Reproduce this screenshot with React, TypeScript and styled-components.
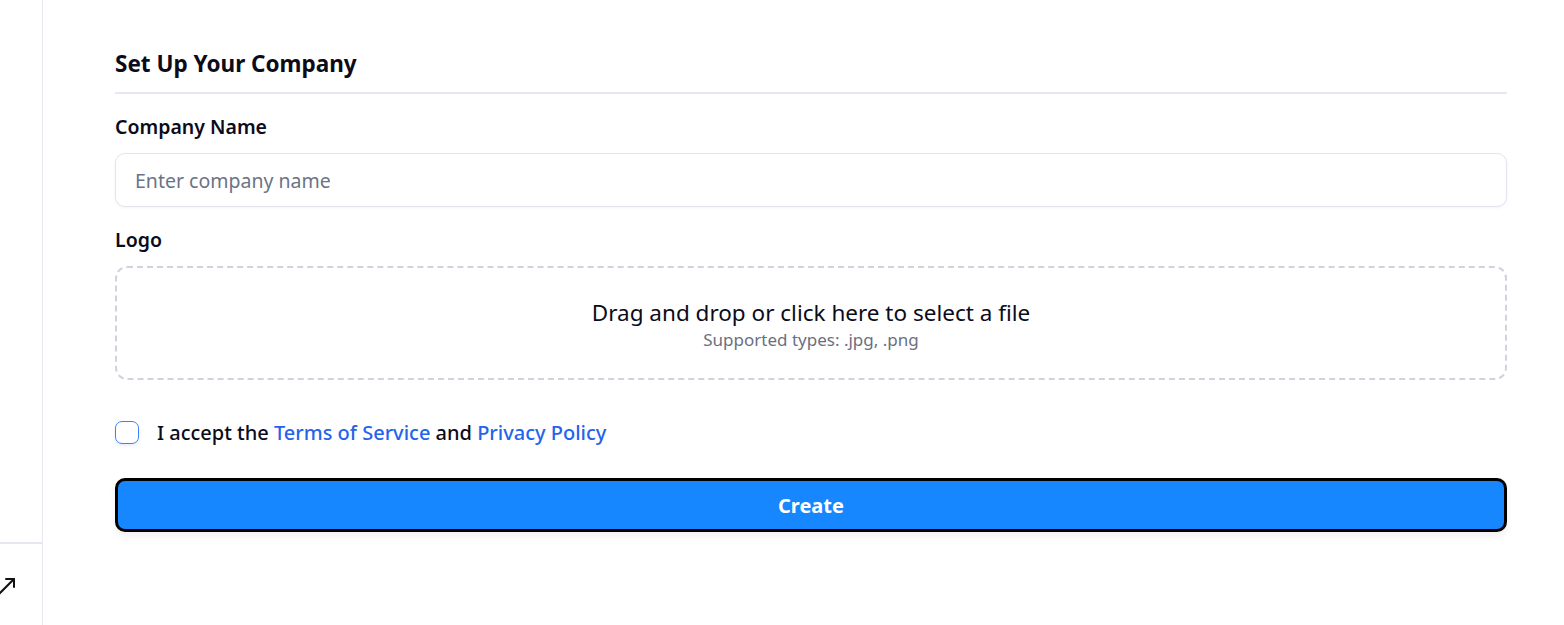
import styled, { createGlobalStyle } from 'styled-components';

const GlobalStyle = createGlobalStyle`
  html, body {
    margin: 0;
    padding: 0;
    background: #ffffff;
    font-family: 'Noto Sans', 'Open Sans', sans-serif;
    color: #0b0b1a;
  }
  * { box-sizing: border-box; }
`;

const Page = styled.div`
  display: flex;
  height: 625px;
  overflow: hidden;
`;

const Sidebar = styled.aside`
  width: 43px;
  flex-shrink: 0;
  border-right: 1px solid #e6e7f2;
  display: flex;
  flex-direction: column;
  justify-content: flex-end;
  overflow: hidden;
`;

const SidebarFooter = styled.div`
  border-top: 2px solid #e6e7f0;
  height: 83px;
  padding-top: 33px;
  color: #111;
  svg {
    display: block;
    margin-left: -4px;
  }
`;

const Main = styled.main`
  flex: 1;
  padding: 48px 57px 0 72px;
`;

const Title = styled.h2`
  margin: 0;
  font-size: 22.5px;
  font-weight: 700;
  line-height: 32px;
  padding-bottom: 12px;
  border-bottom: 2px solid #e5e7f4;
`;

const Field = styled.div`
  display: flex;
  flex-direction: column;
  gap: 14px;
  margin-top: ${(p: { top: number }) => p.top}px;
`;

const Label = styled.label`
  font-size: 19.5px;
  font-weight: 600;
  line-height: 24px;
`;

const Input = styled.input`
  height: 54px;
  border: 1px solid #e4e4ef;
  border-radius: 10px;
  padding: 0 19px;
  font-family: inherit;
  font-size: 19.5px;
  color: #111;
  box-shadow: 0 1px 3px rgba(20, 20, 60, 0.05);
  outline: none;

  &::placeholder {
    color: #6b7386;
  }
`;

const Dropzone = styled.div`
  height: 114px;
  border: 2px dashed #d2d2de;
  border-radius: 12px;
  display: flex;
  flex-direction: column;
  align-items: center;
  justify-content: center;
  gap: 2px;
  padding-top: 4px;
  cursor: pointer;
`;

const DropTitle = styled.div`
  font-size: 22.5px;
  line-height: 28px;
  color: #0b0b1a;
`;

const DropHint = styled.div`
  font-size: 17px;
  line-height: 22px;
  color: #6b6f80;
`;

const TermsRow = styled.label`
  display: flex;
  align-items: center;
  gap: 18px;
  margin-top: 39px;
  font-size: 20px;
  font-weight: 500;
`;

const Check = styled.span`
  width: 24px;
  height: 23px;
  flex-shrink: 0;
  border: 1px solid #3b82f6;
  border-radius: 7px;
  box-shadow: 0 2px 3px rgba(59, 130, 246, 0.12);
`;

const Link = styled.a`
  color: #2563eb;
  text-decoration: none;
`;

const CreateButton = styled.button`
  display: block;
  width: 100%;
  height: 54px;
  margin-top: 32px;
  border: 3px solid #000;
  border-radius: 10px;
  background: #1787ff;
  color: #fff;
  font-family: inherit;
  font-size: 20px;
  font-weight: 700;
  box-shadow: 0 5px 6px rgba(30, 20, 60, 0.06);
  cursor: pointer;
`;

function OpenArrow() {
  return (
    <svg width="20" height="20" viewBox="0 0 20 20" fill="none" stroke="currentColor" strokeWidth="2" strokeLinecap="round" strokeLinejoin="round">
      <path d="M2 18 18 2" />
      <path d="M10 2h8v8" />
    </svg>
  );
}

export default function App() {
  return (
    <>
      <GlobalStyle />
      <Page>
        <Sidebar>
          <SidebarFooter>
            <OpenArrow />
          </SidebarFooter>
        </Sidebar>
        <Main>
          <Title>Set Up Your Company</Title>
          <Field top={21}>
            <Label>Company Name</Label>
            <Input placeholder="Enter company name" />
          </Field>
          <Field top={21}>
            <Label>Logo</Label>
            <Dropzone>
              <DropTitle>Drag and drop or click here to select a file</DropTitle>
              <DropHint>Supported types: .jpg, .png</DropHint>
            </Dropzone>
          </Field>
          <TermsRow>
            <Check />
            <span>
              I accept the <Link href="#">Terms of Service</Link> and <Link href="#">Privacy Policy</Link>
            </span>
          </TermsRow>
          <CreateButton>Create</CreateButton>
        </Main>
      </Page>
    </>
  );
}
